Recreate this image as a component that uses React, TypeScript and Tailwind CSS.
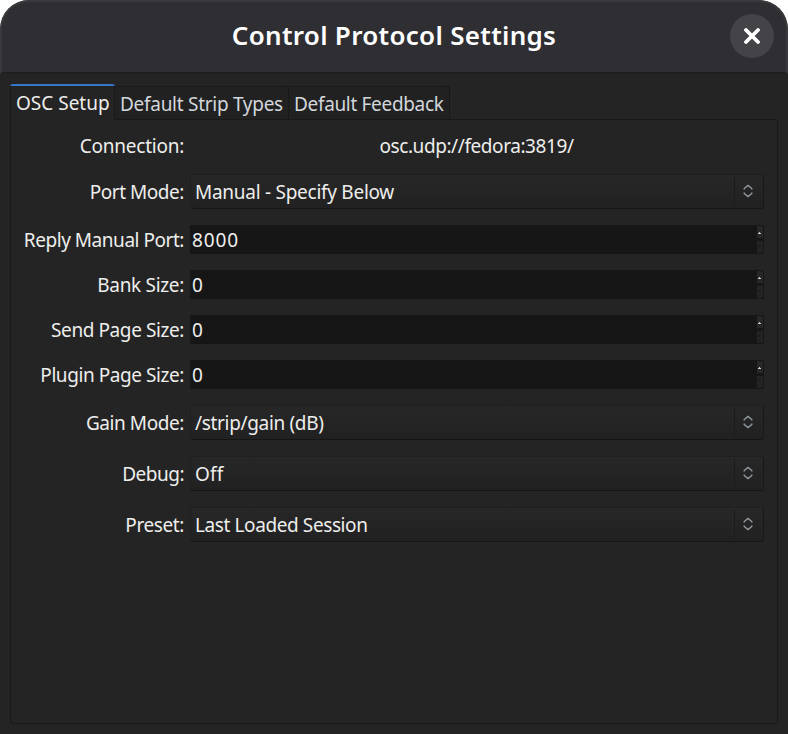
type Row = {
  kind: "combo" | "spin";
  label: string;
  labelTracking: string;
  value: string;
  valueTracking: string;
  gap: string;
};

const rows: Row[] = [
  { kind: "combo", label: "Port Mode:", labelTracking: "tracking-[-0.45px]", value: "Manual - Specify Below", valueTracking: "tracking-[-0.27px]", gap: "mt-[12px]" },
  { kind: "spin", label: "Reply Manual Port:", labelTracking: "tracking-[-0.46px]", value: "8000", valueTracking: "tracking-[0.9px]", gap: "mt-4" },
  { kind: "spin", label: "Bank Size:", labelTracking: "tracking-[-0.32px]", value: "0", valueTracking: "tracking-normal", gap: "mt-4" },
  { kind: "spin", label: "Send Page Size:", labelTracking: "tracking-[-0.41px]", value: "0", valueTracking: "tracking-normal", gap: "mt-4" },
  { kind: "spin", label: "Plugin Page Size:", labelTracking: "tracking-[-0.43px]", value: "0", valueTracking: "tracking-normal", gap: "mt-4" },
  { kind: "combo", label: "Gain Mode:", labelTracking: "tracking-[-0.42px]", value: "/strip/gain (dB)", valueTracking: "tracking-[-0.33px]", gap: "mt-4" },
  { kind: "combo", label: "Debug:", labelTracking: "tracking-[-0.5px]", value: "Off", valueTracking: "tracking-[0.2px]", gap: "mt-4" },
  { kind: "combo", label: "Preset:", labelTracking: "tracking-[-0.4px]", value: "Last Loaded Session", valueTracking: "tracking-[-0.4px]", gap: "mt-4" },
];

function Combo({ value, tracking }: { value: string; tracking: string }) {
  return (
    <div className="flex h-[35px] w-[574px] items-center rounded-[3px] border border-[#1f1f1f] border-r-[#181818] border-b-[#161616] bg-linear-to-b from-[#272727] to-[#212121] pl-1">
      <span className={`flex-1 ${tracking}`}>{value}</span>
      <div className="h-[29px] w-px bg-[#1b1b1b]" />
      <div className="flex w-[28px] pb-0.5 pl-2">
        <svg width="10" height="14" viewBox="0 0 10 14" fill="none" stroke="#929a9f" strokeWidth="1.4">
          <path d="M1.2 5.5v-1L5 1.4l3.8 3.1v1M1.2 8.5v1L5 12.6l3.8-3.1v-1" />
        </svg>
      </div>
    </div>
  );
}

function Spin({ value, tracking }: { value: string; tracking: string }) {
  return (
    <div className="flex h-[29px] w-[574px] items-center rounded-r-[3px] bg-[#161616] pl-0.5">
      <span className={`flex-1 ${tracking}`}>{value}</span>
      <div className="flex h-[29px] w-[7px] flex-col">
        <div className="flex h-[14px] items-center rounded-tr-[3px] border border-l-0 border-[#171717] bg-[#272727] pl-px">
          <svg width="3" height="2" viewBox="0 0 3 2" fill="#c8c8c8" shapeRendering="crispEdges" className="mt-0.5">
            <path d="M0 1h1V0h1v1h1v1H0z" />
          </svg>
        </div>
        <div className="mt-px flex h-[14px] items-start rounded-br-[3px] border border-l-0 border-[#171717] bg-[#232323] pt-[4px] pl-px">
          <svg width="3" height="2" viewBox="0 0 3 2" fill="#191919" shapeRendering="crispEdges">
            <path d="M0 0h3v1H2v1H1V1H0z" />
          </svg>
        </div>
      </div>
    </div>
  );
}

export default function App() {
  return (
    <div className="h-[734px] w-[788px] bg-white font-['Noto_Sans',sans-serif] text-[19px] leading-[26px] whitespace-nowrap text-[#eeeeec]">
      <div className="flex h-full flex-col overflow-hidden rounded-t-[29px] bg-[#242424]">
        <header className="flex h-[74px] shrink-0 items-center rounded-t-[29px] border-2 border-[#3a3a3e] border-b-[#1f1f23] bg-[#2e2e33] pb-0.5">
          <div className="w-[56px]" />
          <h1 className="flex-1 pb-0.5 text-center text-[26px] font-semibold tracking-[0.3px] text-white">Control Protocol Settings</h1>
          <button className="mr-3 flex size-[44px] items-center justify-center rounded-full bg-[#434348]">
            <svg width="16" height="16" viewBox="0 0 16 16" stroke="#fff" strokeWidth="3.8" strokeLinecap="round">
              <path d="m2 2 12 12M14 2 2 14" />
            </svg>
          </button>
        </header>
        <nav className="z-10 mt-[10px] ml-[10px] flex h-9 shrink-0 items-end">
          <div className="h-9 w-[105px] overflow-hidden rounded-t-[3px] bg-[#242424]">
            <div className="h-0.5 bg-[#3476c8]" />
            <div className="h-[34px] border-x border-[#191919] pt-1 pl-[5px]">OSC Setup</div>
          </div>
          <div className="h-[34px] w-[174px] rounded-tr-[3px] border border-l-0 border-[#191919] bg-[#212121] pt-1 pl-[5px] tracking-[-0.28px] text-[#d3d7dc]">Default Strip Types</div>
          <div className="h-[34px] w-[161px] rounded-tr-[3px] border border-l-0 border-[#191919] bg-[#212121] pt-1 pl-[5px] tracking-[-0.33px] text-[#d3d7dc]">Default Feedback</div>
        </nav>
        <main className="-mt-px ml-[10px] h-[605px] w-[768px] shrink-0 rounded-[3px] rounded-tl-none border border-[#191919] pt-[12px]">
          <div className="flex h-[30px] items-center pb-0.5">
            <span className="w-[173px] text-right tracking-[-0.25px]">Connection:</span>
            <span className="ml-[6px] w-[573px] text-center tracking-[-0.42px]">osc.udp://fedora:3819/</span>
          </div>
          {rows.map((row) => (
            <div key={row.label} className={`${row.gap} flex items-center`}>
              <span className={`mr-[6px] w-[173px] text-right ${row.labelTracking}`}>{row.label}</span>
              {row.kind === "combo" ? (
                <Combo value={row.value} tracking={row.valueTracking} />
              ) : (
                <Spin value={row.value} tracking={row.valueTracking} />
              )}
            </div>
          ))}
        </main>
      </div>
    </div>
  );
}
